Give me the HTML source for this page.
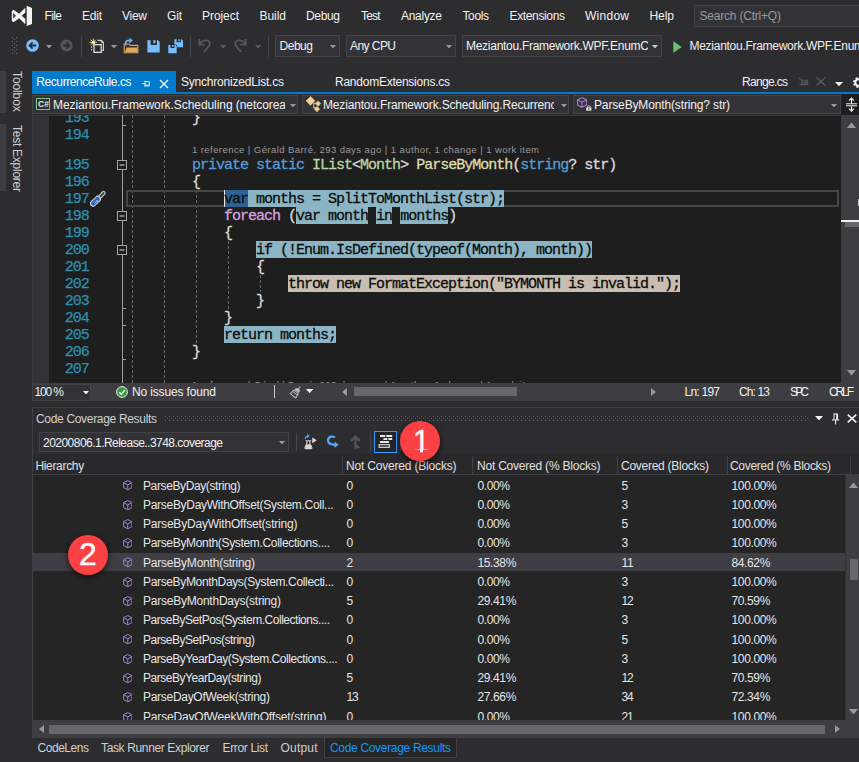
<!DOCTYPE html>
<html><head><meta charset="utf-8"><title>Code Coverage Results</title>
<style>
html,body{margin:0;padding:0;background:#2d2d30;}
body{width:859px;height:762px;position:relative;overflow:hidden;font-family:"Liberation Sans",sans-serif;}
.b{position:absolute;box-sizing:border-box;display:block;}
.t{position:absolute;white-space:pre;line-height:16px;font-family:"Liberation Sans",sans-serif;}
.m{font-family:"Liberation Mono",monospace;}
.code{position:absolute;left:128px;white-space:pre;font-family:"Liberation Mono",monospace;font-size:15px;letter-spacing:-1px;line-height:17px;height:17px;color:#dcdcdc;-webkit-text-stroke:0.3px;}
.ln{position:absolute;left:49px;width:39.8px;text-align:right;font-family:"Liberation Mono",monospace;font-size:15px;letter-spacing:-1px;line-height:17px;height:17px;color:#2b91af;-webkit-text-stroke:0.25px;}
.k{color:#569cd6}.c{color:#d8a0df}.i{color:#b8d7a3}.f{color:#dcdcaa}.s{color:#d69d85}.ty{color:#4ec9b0}
.hb{background:#8bb5c5;color:#000}.hn{background:#c8bdb0;color:#000}.sel{background:#2b6194;color:#000}
.d{color:#0c0c0c}
</style></head><body>
<div class="b " style="left:0px;top:71px;width:6px;height:42px;background:#3d3d42;"></div>
<div class="b " style="left:0px;top:124px;width:6px;height:67px;background:#3d3d42;"></div>
<span class="t" style="left:8px;top:71px;width:18px;font-size:12px;color:#d0d0d0;writing-mode:vertical-rl;line-height:18px;letter-spacing:-0.1px">Toolbox</span>
<span class="t" style="left:8px;top:125px;width:18px;font-size:12px;color:#d0d0d0;writing-mode:vertical-rl;line-height:18px;letter-spacing:-0.25px">Test Explorer</span>
<svg class="b" style="left:11px;top:5px;" width="22" height="22" viewBox="0 0 22 22"><path fill="#f4f4f4" d="M15.7 0.8L21 2.9V19L15.7 21Z"/><path fill="#f4f4f4" fill-rule="evenodd" d="M14.3 2.8V19.2L8.1 13.3L2.6 17.2L0.8 16V6L2.6 4.8L8.1 8.7Z M14.3 7.6V13.8L10.8 10.8Z M2.2 7.8V13.8L4.8 10.8Z"/></svg>
<span class="t " style="left:44.50px;top:7.92px;font-size:12px;color:#f1f1f1;letter-spacing:-0.612px;">File</span>
<span class="t " style="left:82.00px;top:7.92px;font-size:12px;color:#f1f1f1;letter-spacing:-0.226px;">Edit</span>
<span class="t " style="left:122.00px;top:7.92px;font-size:12px;color:#f1f1f1;letter-spacing:-0.264px;">View</span>
<span class="t " style="left:167.00px;top:7.92px;font-size:12px;color:#f1f1f1;letter-spacing:-0.167px;">Git</span>
<span class="t " style="left:202.00px;top:7.92px;font-size:12px;color:#f1f1f1;letter-spacing:-0.058px;">Project</span>
<span class="t " style="left:259.50px;top:7.92px;font-size:12px;color:#f1f1f1;letter-spacing:-0.046px;">Build</span>
<span class="t " style="left:306.00px;top:7.92px;font-size:12px;color:#f1f1f1;letter-spacing:-0.340px;">Debug</span>
<span class="t " style="left:361.00px;top:7.92px;font-size:12px;color:#f1f1f1;letter-spacing:-0.836px;">Test</span>
<span class="t " style="left:401.00px;top:7.92px;font-size:12px;color:#f1f1f1;letter-spacing:-0.282px;">Analyze</span>
<span class="t " style="left:462.50px;top:7.92px;font-size:12px;color:#f1f1f1;letter-spacing:-0.378px;">Tools</span>
<span class="t " style="left:509.50px;top:7.92px;font-size:12px;color:#f1f1f1;letter-spacing:-0.355px;">Extensions</span>
<span class="t " style="left:585.00px;top:7.92px;font-size:12px;color:#f1f1f1;letter-spacing:0.264px;">Window</span>
<span class="t " style="left:649.50px;top:7.92px;font-size:12px;color:#f1f1f1;letter-spacing:-0.060px;">Help</span>
<div class="b " style="left:694px;top:5px;width:170px;height:22px;background:#333337;border:1px solid #434346;"></div>
<span class="t " style="left:699.50px;top:7.92px;font-size:12px;color:#999999;letter-spacing:-0.204px;">Search (Ctrl+Q)</span>
<svg class="b" style="left:12px;top:37px;" width="5" height="18" viewBox="0 0 5 18"><rect x="0" y="0" width="1" height="1" fill="#66666b"/><rect x="4" y="0" width="1" height="1" fill="#66666b"/><rect x="2" y="2" width="1" height="1" fill="#66666b"/><rect x="2" y="2" width="1" height="1" fill="#66666b"/><rect x="0" y="4" width="1" height="1" fill="#66666b"/><rect x="4" y="4" width="1" height="1" fill="#66666b"/><rect x="2" y="6" width="1" height="1" fill="#66666b"/><rect x="2" y="6" width="1" height="1" fill="#66666b"/><rect x="0" y="8" width="1" height="1" fill="#66666b"/><rect x="4" y="8" width="1" height="1" fill="#66666b"/><rect x="2" y="10" width="1" height="1" fill="#66666b"/><rect x="2" y="10" width="1" height="1" fill="#66666b"/><rect x="0" y="12" width="1" height="1" fill="#66666b"/><rect x="4" y="12" width="1" height="1" fill="#66666b"/><rect x="2" y="14" width="1" height="1" fill="#66666b"/><rect x="2" y="14" width="1" height="1" fill="#66666b"/><rect x="0" y="16" width="1" height="1" fill="#66666b"/><rect x="4" y="16" width="1" height="1" fill="#66666b"/></svg>
<svg class="b" style="left:25.6px;top:39.3px;" width="13" height="13" viewBox="0 0 13 13"><circle cx="6.5" cy="6.5" r="6.3" fill="#75beff"/><path d="M10.2 6.5H3.8M6.6 3.4L3.5 6.5L6.6 9.6" stroke="#2d2d30" stroke-width="1.8" fill="none"/></svg>
<svg class="b" style="left:46.0px;top:44.75px;" width="6" height="3.5" viewBox="0 0 6 3.5"><path d="M0 0H6L3.0 3.5Z" fill="#999"/></svg>
<svg class="b" style="left:59.5px;top:39.3px;" width="13" height="13" viewBox="0 0 13 13"><circle cx="6.5" cy="6.5" r="6.1" fill="#55555a"/><path d="M2.8 6.5H9.2M6.4 3.4L9.5 6.5L6.4 9.6" stroke="#2d2d30" stroke-width="1.8" fill="none"/></svg>
<div class="b " style="left:81px;top:36px;width:1px;height:21px;background:#46464a;"></div>
<svg class="b" style="left:88px;top:37px;" width="17" height="17" viewBox="0 0 17 17"><path d="M9.5 3.4H13.4L15.4 5.4V13.5H14" stroke="#d8d8d8" fill="none" stroke-width="1.1"/><path d="M13.2 3.4V5.6H15.4" stroke="#d8d8d8" fill="none" stroke-width="0.9"/><path d="M6 7.6H13.2V15.4H6Z" stroke="#e4e4e4" fill="#2d2d30" stroke-width="1.2"/><path d="M3.6 9.2V14.6" stroke="#d8d8d8" stroke-width="1" stroke-dasharray="1.6 1.2"/><path d="M5.3 1.6V9M1.6 5.3H9M2.7 2.7L7.9 7.9M7.9 2.7L2.7 7.9" stroke="#f2d58a" stroke-width="1"/><circle cx="5.3" cy="5.3" r="1.3" fill="#fff3c8"/></svg>
<svg class="b" style="left:111.0px;top:44.75px;" width="6" height="3.5" viewBox="0 0 6 3.5"><path d="M0 0H6L3.0 3.5Z" fill="#999"/></svg>
<svg class="b" style="left:123px;top:37px;" width="16" height="17" viewBox="0 0 16 17"><path d="M1.2 7H6L7.2 8.4H14.8V15.8H1.2Z" fill="#3a3128" stroke="#dba55c" stroke-width="1.1"/><path d="M1.8 15.3L3.6 10.6H14.4V15.3Z" fill="#dca960"/><path d="M2.6 8.6V6.6C2.6 4.2 4.2 3.4 6.6 3.4H7.4" stroke="#6cb6ff" fill="none" stroke-width="1.6"/><path d="M6.4 0.6L9.8 3.5L6.4 6.6Z" fill="#6cb6ff"/></svg>
<svg class="b" style="left:146.5px;top:39.8px;" width="13" height="13" viewBox="0 0 13 13"><path d="M0.4 0.3H11L12.7 2V12.6H0.4Z" fill="#75beff"/><rect x="3.6" y="0" width="6.3" height="5" fill="#2d2d30"/><rect x="6.3" y="0.2" width="2.1" height="3" fill="#75beff"/></svg>
<svg class="b" style="left:167.5px;top:38.5px;" width="16" height="15" viewBox="0 0 16 15"><path d="M6.4 0.3H13.6L15 1.7V8.3H6.4Z" fill="#75beff"/><rect x="8.6" y="0" width="4.2" height="3.2" fill="#2d2d30"/><rect x="10.4" y="0.2" width="1.4" height="2" fill="#75beff"/><path d="M-0.4 5.4H8.2L9.3 6.5V14.8H-0.4Z" fill="#2d2d30"/><path d="M0.3 6H7.6L8.7 7.1V14.3H0.3Z" fill="#75beff"/><rect x="2.4" y="5.8" width="4.2" height="3.2" fill="#2d2d30"/><rect x="4.2" y="6" width="1.4" height="2" fill="#75beff"/></svg>
<div class="b " style="left:190px;top:36px;width:1px;height:21px;background:#46464a;"></div>
<svg class="b" style="left:198px;top:38px;" width="14" height="15" viewBox="0 0 14 15"><path d="M1.4 1.1V6.6H6.7" stroke="#57575b" fill="none" stroke-width="1.8"/><path d="M1.8 6.2C4 1.5 11.5 1 11.8 5.5C11.9 8 8 11.5 5.6 14" stroke="#57575b" fill="none" stroke-width="1.8"/></svg>
<svg class="b" style="left:219.8px;top:44.5px;" width="6.4" height="3.6" viewBox="0 0 6.4 3.6"><path d="M0 0H6.4L3.2 3.6Z" fill="#5c5c60"/></svg>
<svg class="b" style="left:233px;top:38px;" width="14" height="15" viewBox="0 0 14 15"><path d="M12.6 1.1V6.6H7.3" stroke="#57575b" fill="none" stroke-width="1.8"/><path d="M12.2 6.2C10 1.5 2.5 1 2.2 5.5C2.1 8 6 11.5 8.4 14" stroke="#57575b" fill="none" stroke-width="1.8"/></svg>
<svg class="b" style="left:254.8px;top:44.5px;" width="6.4" height="3.6" viewBox="0 0 6.4 3.6"><path d="M0 0H6.4L3.2 3.6Z" fill="#5c5c60"/></svg>
<div class="b " style="left:268px;top:36px;width:1px;height:21px;background:#46464a;"></div>
<div class="b " style="left:275px;top:35px;width:64.5px;height:21.5px;background:#333337;border:1px solid #434346;"></div>
<span class="t " style="left:279.50px;top:37.92px;font-size:12px;color:#f1f1f1;letter-spacing:-0.465px;">Debug</span>
<svg class="b" style="left:329.5px;top:44.75px;" width="6" height="3.5" viewBox="0 0 6 3.5"><path d="M0 0H6L3.0 3.5Z" fill="#999"/></svg>
<div class="b " style="left:346px;top:35px;width:110px;height:21.5px;background:#333337;border:1px solid #434346;"></div>
<span class="t " style="left:350.00px;top:37.92px;font-size:12px;color:#f1f1f1;letter-spacing:-0.558px;">Any CPU</span>
<svg class="b" style="left:446.0px;top:44.75px;" width="6" height="3.5" viewBox="0 0 6 3.5"><path d="M0 0H6L3.0 3.5Z" fill="#999"/></svg>
<div class="b " style="left:462px;top:35px;width:200px;height:21.5px;background:#333337;border:1px solid #434346;"></div>
<div class="b" style="left:463px;top:36px;width:184.5px;height:20px;overflow:hidden">
<span class="t " style="left:3.00px;top:1.92px;font-size:12px;color:#f1f1f1;letter-spacing:-0.276px;">Meziantou.Framework.WPF.EnumC</span>
</div>
<svg class="b" style="left:652.0px;top:44.75px;" width="6" height="3.5" viewBox="0 0 6 3.5"><path d="M0 0H6L3.0 3.5Z" fill="#c8c8c8"/></svg>
<svg class="b" style="left:672.5px;top:40.5px;" width="9" height="12" viewBox="0 0 9 12"><path d="M0.3 0.3L8.7 6L0.3 11.7Z" fill="#6cc26c"/></svg>
<span class="t " style="left:689.50px;top:37.92px;font-size:12px;color:#f1f1f1;letter-spacing:-0.276px;">Meziantou.Framework.WPF.EnumC</span>
<div class="b " style="left:32px;top:71px;width:144px;height:22px;background:#007acc;"></div>
<div class="b " style="left:32px;top:92px;width:827px;height:2px;background:#007acc;"></div>
<span class="t " style="left:36.30px;top:73.52px;font-size:12px;color:#ffffff;letter-spacing:-0.421px;">RecurrenceRule.cs</span>
<svg class="b" style="left:141.5px;top:80px;" width="9" height="8" viewBox="0 0 9 8"><path d="M0.2 3.7H3M3 0.6V6.8M3 1.7H7.4V5.2H3M3 5.8H7.4" stroke="#eaf4fb" fill="none" stroke-width="1"/></svg>
<svg class="b" style="left:159px;top:79px;" width="10" height="10" viewBox="0 0 10 10"><path d="M1 1L9 9M9 1L1 9" stroke="#ffffff" stroke-width="1.3"/></svg>
<span class="t " style="left:181.00px;top:73.52px;font-size:12px;color:#f1f1f1;letter-spacing:-0.206px;">SynchronizedList.cs</span>
<span class="t " style="left:335.00px;top:73.52px;font-size:12px;color:#f1f1f1;letter-spacing:-0.244px;">RandomExtensions.cs</span>
<span class="t " style="left:742.00px;top:73.52px;font-size:12px;color:#f1f1f1;letter-spacing:-0.671px;">Range.cs</span>
<svg class="b" style="left:797.5px;top:76.5px;" width="12" height="9" viewBox="0 0 12 9"><path d="M0.6 0.6L3 2.8" stroke="#58585d" stroke-width="1.1"/><rect x="3" y="2.6" width="6" height="4.6" fill="#4c4c51"/><path d="M3.4 3L8.6 6.8M8.6 3L3.4 6.8" stroke="#3a3a3e" stroke-width="0.8"/><path d="M1.4 7.6H10.6" stroke="#58585d" stroke-width="1.1"/><path d="M9.4 2.4V7.6" stroke="#58585d" stroke-width="1"/></svg>
<svg class="b" style="left:816px;top:76.5px;" width="10" height="9" viewBox="0 0 10 9"><path d="M0.6 0.5L9.4 8.5M9.4 0.5L0.6 8.5" stroke="#5c5c61" stroke-width="1.2"/></svg>
<svg class="b" style="left:835.0px;top:81.85px;" width="8" height="4.3" viewBox="0 0 8 4.3"><path d="M0 0H8L4.0 4.3Z" fill="#f1f1f1"/></svg>
<svg class="b" style="left:851.5px;top:75.5px;" width="13" height="13" viewBox="0 0 13 13"><circle cx="6.5" cy="6.5" r="4.2" stroke="#f1f1f1" stroke-width="2.6" fill="none" stroke-dasharray="1.9 1.4"/><circle cx="6.5" cy="6.5" r="3.2" stroke="#f1f1f1" stroke-width="2" fill="none"/></svg>
<div class="b " style="left:32px;top:94px;width:827px;height:22px;background:#2d2d30;"></div>
<div class="b " style="left:32px;top:95px;width:266px;height:19px;background:#333337;border:1px solid #434346;"></div>
<div class="b " style="left:302px;top:95px;width:267px;height:19px;background:#333337;border:1px solid #434346;"></div>
<div class="b " style="left:573px;top:95px;width:267.5px;height:19px;background:#333337;border:1px solid #434346;"></div>
<div class="b " style="left:841px;top:94px;width:18px;height:22px;background:#1e1e1e;"></div>
<svg class="b" style="left:36px;top:98px;" width="14" height="12" viewBox="0 0 14 12"><rect x="0.5" y="0.5" width="13" height="11" fill="none" stroke="#7cc47c" stroke-width="1"/><text x="2" y="9.3" font-family="Liberation Sans" font-size="8.5" font-weight="bold" fill="#e0e0e0">C#</text></svg>
<div class="b" style="left:50px;top:95px;width:235px;height:19px;overflow:hidden">
<span class="t " style="left:3.00px;top:2.42px;font-size:12px;color:#f1f1f1;letter-spacing:-0.063px;">Meziantou.Framework.Scheduling (netcorea</span>
</div>
<svg class="b" style="left:290.0px;top:103.75px;" width="6" height="3.5" viewBox="0 0 6 3.5"><path d="M0 0H6L3.0 3.5Z" fill="#999"/></svg>
<svg class="b" style="left:305px;top:95px;" width="17" height="18" viewBox="0 0 17 18"><path d="M8.3 8.2H10.6M8.7 8.2V12.6H10.4" stroke="#d8b878" fill="none" stroke-width="1.1"/><path d="M5.5 1.4L9.9 5.8L5.5 10.2L1.1 5.8Z" fill="#f2d59c" stroke="#e2bd7c" stroke-width="0.8"/><path d="M13 5.9L15.7 8.6L13 11.3L10.3 8.6Z" fill="#f2d59c" stroke="#e2bd7c" stroke-width="0.7"/><path d="M12 11.4L14.7 14.1L12 16.8L9.3 14.1Z" fill="#f2d59c" stroke="#e2bd7c" stroke-width="0.7"/></svg>
<div class="b" style="left:320px;top:95px;width:234px;height:19px;overflow:hidden">
<span class="t " style="left:3.00px;top:2.42px;font-size:12px;color:#f1f1f1;letter-spacing:-0.169px;">Meziantou.Framework.Scheduling.Recurrenc</span>
</div>
<svg class="b" style="left:561.0px;top:103.75px;" width="6" height="3.5" viewBox="0 0 6 3.5"><path d="M0 0H6L3.0 3.5Z" fill="#999"/></svg>
<svg class="b" style="left:577px;top:97.3px;" width="10" height="11" viewBox="0 0 10 11"><path d="M5 0.6L9.4 2.8V8L5 10.4L0.6 8V2.8Z M0.8 2.9L5 5.2L9.2 2.9 M5 5.2V10.2" fill="none" stroke="#a77fd4" stroke-width="1.05" stroke-linejoin="round"/></svg>
<svg class="b" style="left:586px;top:105.3px;" width="6" height="6" viewBox="0 0 6 6"><rect x="0.2" y="2.4" width="5.2" height="3.3" fill="#e0e0e0"/><rect x="2.2" y="3.4" width="1.2" height="1.3" fill="#333337"/><path d="M1.4 2.6V1.7C1.4 0.4 4.2 0.4 4.2 1.7V2.6" stroke="#e0e0e0" fill="none" stroke-width="0.9"/></svg>
<span class="t " style="left:594.00px;top:97.42px;font-size:12px;color:#f1f1f1;letter-spacing:-0.141px;">ParseByMonth(string? str)</span>
<svg class="b" style="left:831.0px;top:103.75px;" width="6" height="3.5" viewBox="0 0 6 3.5"><path d="M0 0H6L3.0 3.5Z" fill="#999"/></svg>
<svg class="b" style="left:845px;top:97px;" width="13" height="15" viewBox="0 0 13 15"><path d="M1 6.8H12M1 8.8H12" stroke="#f1f1f1" stroke-width="1"/><path d="M6.5 1.2V6.4M6.5 9.2V14" stroke="#f1f1f1" stroke-width="1.1"/><path d="M4 3.6L6.5 1L9 3.6M4 11.6L6.5 14.2L9 11.6" stroke="#f1f1f1" fill="none" stroke-width="1.1"/></svg>
<div class="b " style="left:32px;top:115px;width:809px;height:268px;background:#1e1e1e;"></div>
<div class="b " style="left:32px;top:115px;width:17px;height:268px;background:#333335;"></div>
<div class="b " style="left:32px;top:115px;width:809px;height:1px;background:#38383b;"></div>
<div class="b " style="left:32px;top:115px;width:1px;height:268px;background:#3a3a3d;"></div>
<div class="b" style="left:0;top:0;width:859px;height:762px;clip-path:inset(115px 18px 379px 32px)">
<div class="b" style="left:132px;top:100px;width:1px;height:290px;background:repeating-linear-gradient(to bottom,#6a6a6a 0,#6a6a6a 3px,transparent 3px,transparent 5px)"></div>
<div class="b" style="left:164px;top:100px;width:1px;height:290px;background:repeating-linear-gradient(to bottom,#6a6a6a 0,#6a6a6a 3px,transparent 3px,transparent 5px)"></div>
<div class="b" style="left:196px;top:190px;width:1px;height:153px;background:repeating-linear-gradient(to bottom,#6a6a6a 0,#6a6a6a 3px,transparent 3px,transparent 5px)"></div>
<div class="b" style="left:228px;top:241px;width:1px;height:68px;background:repeating-linear-gradient(to bottom,#6a6a6a 0,#6a6a6a 3px,transparent 3px,transparent 5px)"></div>
<div class="b" style="left:260px;top:275px;width:1px;height:17px;background:repeating-linear-gradient(to bottom,#6a6a6a 0,#6a6a6a 3px,transparent 3px,transparent 5px)"></div>
<div class="b " style="left:122px;top:100px;width:1px;height:290px;background:#a0a0a0;"></div>
<div class="b " style="left:122px;top:125px;width:4px;height:1px;background:#a0a0a0;"></div>
<div class="b " style="left:122px;top:308px;width:4px;height:1px;background:#a0a0a0;"></div>
<div class="b " style="left:122px;top:325px;width:4px;height:1px;background:#a0a0a0;"></div>
<div class="b " style="left:122px;top:359px;width:4px;height:1px;background:#a0a0a0;"></div>
<svg class="b" style="left:117px;top:160px;" width="10" height="10" viewBox="0 0 10 10"><rect x="0.5" y="0.5" width="9" height="9" fill="#1e1e1e" stroke="#a5a5a5"/><path d="M2.5 5H7.5" stroke="#dcdcdc" stroke-width="1"/></svg>
<svg class="b" style="left:117px;top:211px;" width="10" height="10" viewBox="0 0 10 10"><rect x="0.5" y="0.5" width="9" height="9" fill="#1e1e1e" stroke="#a5a5a5"/><path d="M2.5 5H7.5" stroke="#dcdcdc" stroke-width="1"/></svg>
<svg class="b" style="left:117px;top:245px;" width="10" height="10" viewBox="0 0 10 10"><rect x="0.5" y="0.5" width="9" height="9" fill="#1e1e1e" stroke="#a5a5a5"/><path d="M2.5 5H7.5" stroke="#dcdcdc" stroke-width="1"/></svg>
<div class="b " style="left:126px;top:190px;width:713px;height:17px;border:2px solid #464646;"></div>
<div class="b " style="left:224.0px;top:190px;width:280.0px;height:17px;background:#8bb5c5;"></div>
<div class="b " style="left:224.0px;top:190px;width:24.0px;height:17px;background:#2b6194;"></div>
<div class="b " style="left:296.0px;top:207px;width:72.0px;height:17px;background:#8bb5c5;"></div>
<div class="b " style="left:376.0px;top:207px;width:16.0px;height:17px;background:#8bb5c5;"></div>
<div class="b " style="left:400.0px;top:207px;width:48.0px;height:17px;background:#8bb5c5;"></div>
<div class="b " style="left:256.0px;top:241px;width:336.0px;height:17px;background:#8bb5c5;"></div>
<div class="b " style="left:288.0px;top:275px;width:392.0px;height:17px;background:#c8bdb0;"></div>
<div class="b " style="left:224.0px;top:326px;width:112.0px;height:17px;background:#8bb5c5;"></div>
<div class="b " style="left:224px;top:190px;width:1px;height:17px;background:#e8e8e8;"></div>
<div class="ln" style="top:109.5px">193</div>
<div class="code" style="top:109.5px">        }</div>
<div class="ln" style="top:126.5px">194</div>
<div class="ln" style="top:156.5px">195</div>
<div class="code" style="top:156.5px">        <span class="k">private</span> <span class="k">static</span> <span class="i">IList</span>&lt;<span class="i">Month</span>&gt; <span class="f">ParseByMonth</span>(<span class="k">string</span>? str)</div>
<div class="ln" style="top:173.5px">196</div>
<div class="code" style="top:173.5px">        {</div>
<div class="ln" style="top:190.5px">197</div>
<div class="code" style="top:190.5px">            <span class="d">var months = SplitToMonthList(str);</span></div>
<div class="ln" style="top:207.5px">198</div>
<div class="code" style="top:207.5px">            <span class="c">foreach</span> (<span class="d">var month</span> <span class="d">in</span> <span class="d">months</span>)</div>
<div class="ln" style="top:224.5px">199</div>
<div class="code" style="top:224.5px">            {</div>
<div class="ln" style="top:241.5px">200</div>
<div class="code" style="top:241.5px">                <span class="d">if (!Enum.IsDefined(typeof(Month), month))</span></div>
<div class="ln" style="top:258.5px">201</div>
<div class="code" style="top:258.5px">                {</div>
<div class="ln" style="top:275.5px">202</div>
<div class="code" style="top:275.5px">                    <span class="d">throw new FormatException("BYMONTH is invalid.");</span></div>
<div class="ln" style="top:292.5px">203</div>
<div class="code" style="top:292.5px">                }</div>
<div class="ln" style="top:309.5px">204</div>
<div class="code" style="top:309.5px">            }</div>
<div class="ln" style="top:326.5px">205</div>
<div class="code" style="top:326.5px">            <span class="d">return months;</span></div>
<div class="ln" style="top:343.5px">206</div>
<div class="code" style="top:343.5px">        }</div>
<div class="ln" style="top:360.5px">207</div>
<span class="t " style="left:192.00px;top:141.94px;font-size:9.5px;color:#999999;letter-spacing:0.429px;">1 reference | Gérald Barré, 293 days ago | 1 author, 1 change | 1 work item</span>
<span class="t " style="left:192.00px;top:376.64px;font-size:9.5px;color:#999999;letter-spacing:0.429px;">1 reference | Gérald Barré, 293 days ago | 1 author, 1 change | 1 work item</span>
<svg class="b" style="left:90px;top:190px;" width="17" height="17" viewBox="0 0 17 17"><path d="M8.6 8.4L13.6 3" stroke="#c4c4c4" stroke-width="4.2" stroke-linecap="round"/><path d="M9.2 7.8L13.5 3.1" stroke="#454548" stroke-width="2" stroke-linecap="round"/><path d="M3.1 13.6L7.8 8.9" stroke="#d4d4d4" stroke-width="6.4" stroke-linecap="round"/><path d="M3.2 13.5L7.6 9.1" stroke="#2a66c0" stroke-width="4.4" stroke-linecap="round"/><path d="M4.2 11.2L6.6 13.4M5.6 9.8L8 12M4.4 13.6L8 10" stroke="#a8c4ec" stroke-width="0.6"/></svg>
</div>
<div class="b " style="left:841px;top:115px;width:18px;height:268px;background:#3e3e42;"></div>
<svg class="b" style="left:847px;top:122px;" width="9" height="6" viewBox="0 0 9 6"><path d="M0 6H9L4.5 0.5Z" fill="#999"/></svg>
<svg class="b" style="left:847px;top:370px;" width="9" height="6" viewBox="0 0 9 6"><path d="M0 0H9L4.5 5.5Z" fill="#999"/></svg>
<div class="b " style="left:841px;top:220px;width:18px;height:2px;background:#f1f1f1;"></div>
<div class="b " style="left:845px;top:222px;width:14px;height:5px;background:#686868;"></div>
<div class="b " style="left:857.5px;top:199px;width:1.5px;height:7px;background:#c8c8c8;"></div>
<div class="b " style="left:32px;top:383px;width:827px;height:18px;background:#3e3e42;"></div>
<div class="b " style="left:32px;top:384px;width:58.5px;height:16.5px;background:#333337;border:1px solid #434346;"></div>
<span class="t " style="left:34.50px;top:383.92px;font-size:12px;color:#f1f1f1;letter-spacing:-1.131px;">100 %</span>
<svg class="b" style="left:83.0px;top:390.75px;" width="6" height="3.5" viewBox="0 0 6 3.5"><path d="M0 0H6L3.0 3.5Z" fill="#f1f1f1"/></svg>
<svg class="b" style="left:116px;top:386px;" width="12" height="12" viewBox="0 0 12 12"><circle cx="6" cy="6" r="5.4" fill="#3a9a3a" stroke="#e8e8e8" stroke-width="1"/><path d="M3.2 6.2L5.2 8.2L8.8 4.2" stroke="#ffffff" stroke-width="1.5" fill="none"/></svg>
<span class="t " style="left:132.00px;top:383.92px;font-size:12px;color:#f1f1f1;letter-spacing:-0.146px;">No issues found</span>
<div class="b " style="left:274px;top:385px;width:1.4px;height:13px;background:#c4ccdc;"></div>
<svg class="b" style="left:288.5px;top:384.5px;" width="14" height="14" viewBox="0 0 14 14"><g transform="translate(7 7) rotate(38)" stroke="#bdbdbd" fill="none"><path d="M0 -7V-4" stroke-width="1"/><path d="M-2.9 -0.9Q-2.9 -4.3 0 -4.3Q2.9 -4.3 2.9 -0.9Z" fill="#bdbdbd" stroke="none"/><path d="M-2.8 -0.2L-3.5 4.9H3.5L2.8 -0.2Z" stroke-width="1"/><path d="M-3 1.6H3" stroke="#d8c8d8" stroke-width="0.8"/></g></svg>
<svg class="b" style="left:305.9px;top:389.09999999999997px;" width="7.2" height="4.2" viewBox="0 0 7.2 4.2"><path d="M0 0H7.2L3.6 4.2Z" fill="#f4f4f4"/></svg>
<svg class="b" style="left:342px;top:388px;" width="5" height="8" viewBox="0 0 5 8"><path d="M5 0V8L0 4Z" fill="#999"/></svg>
<div class="b " style="left:354px;top:387px;width:163px;height:9px;background:#686868;"></div>
<svg class="b" style="left:651px;top:388px;" width="5" height="8" viewBox="0 0 5 8"><path d="M0 0V8L5 4Z" fill="#999"/></svg>
<span class="t " style="left:684.50px;top:383.92px;font-size:12px;color:#f1f1f1;letter-spacing:-0.756px;">Ln: 197</span>
<span class="t " style="left:739.00px;top:383.92px;font-size:12px;color:#f1f1f1;letter-spacing:-0.871px;">Ch: 13</span>
<span class="t " style="left:790.00px;top:383.92px;font-size:12px;color:#f1f1f1;letter-spacing:-2.837px;">SPC</span>
<span class="t " style="left:829.00px;top:383.92px;font-size:12px;color:#f1f1f1;letter-spacing:-2.112px;">CRLF</span>
<div class="b " style="left:32px;top:407px;width:827px;height:331px;background:#2d2d30;border:1px solid #3f3f46;border-right:none;border-bottom:none;"></div>
<span class="t " style="left:36.00px;top:410.92px;font-size:12px;color:#d0d0d0;letter-spacing:-0.320px;">Code Coverage Results</span>
<div class="b" style="left:165px;top:416px;width:643px;height:5px;background-image:radial-gradient(circle at 0.5px 0.5px,#5a5a5f 0.55px,transparent 0.7px),radial-gradient(circle at 0.5px 0.5px,#5a5a5f 0.55px,transparent 0.7px);background-size:4px 4px,4px 4px;background-position:0 0,2px 2px"></div>
<svg class="b" style="left:815.0px;top:415.75px;" width="8" height="4.5" viewBox="0 0 8 4.5"><path d="M0 0H8L4.0 4.5Z" fill="#f1f1f1"/></svg>
<svg class="b" style="left:831px;top:412.5px;" width="10" height="12" viewBox="0 0 10 12"><path d="M2.6 0.9H6.6" stroke="#f1f1f1" stroke-width="1"/><path d="M3 0.9V6.6" stroke="#f1f1f1" stroke-width="1"/><path d="M6.1 0.9V6.6" stroke="#f1f1f1" stroke-width="1.9"/><path d="M1 6.9H8.2" stroke="#f1f1f1" stroke-width="1.1"/><path d="M4.6 7V11.4" stroke="#f1f1f1" stroke-width="1.1"/></svg>
<svg class="b" style="left:847px;top:413.5px;" width="10" height="9" viewBox="0 0 10 9"><path d="M0.7 0.6L9.3 8.4M9.3 0.6L0.7 8.4" stroke="#f1f1f1" stroke-width="1.6"/></svg>
<div class="b " style="left:39px;top:432px;width:250px;height:19.5px;background:#333337;border:1px solid #434346;"></div>
<span class="t " style="left:43.00px;top:434.62px;font-size:12px;color:#f1f1f1;letter-spacing:-0.526px;">20200806.1.Release..3748.coverage</span>
<svg class="b" style="left:279.0px;top:440.75px;" width="6" height="3.5" viewBox="0 0 6 3.5"><path d="M0 0H6L3.0 3.5Z" fill="#999"/></svg>
<div class="b " style="left:296px;top:433px;width:1px;height:18px;background:#46464a;"></div>
<svg class="b" style="left:304px;top:434px;" width="14" height="16" viewBox="0 0 14 16"><path d="M1.6 6.8H7.2M2.9 6.8V9.4L0.9 13.6Q0.7 14.6 1.8 14.6H7Q8.1 14.6 7.9 13.6L5.9 9.4V6.8" stroke="#d8d8d8" fill="none" stroke-width="1.1"/><path d="M1.5 12.2L2.6 10.2H6.2L7.3 12.2V14H1.5Z" fill="#d8d8d8"/><path d="M8.2 3.4L12.9 6.3L8.2 9.2Z" fill="#d8d8d8"/><path d="M1.2 5C1.3 3 2.6 2 4.3 2M3 0.6L4.9 2L3 3.6" stroke="#4fa3f7" fill="none" stroke-width="1.2"/></svg>
<svg class="b" style="left:326px;top:435px;" width="14" height="14" viewBox="0 0 14 14"><path d="M9 2.6C7.5 0.8 2 1 2 5.4C2 9.2 5.5 9.6 9.5 9.6" stroke="#55aaff" fill="none" stroke-width="2.2"/><path d="M8.6 6.4L12.6 9.7L8.6 13Z" fill="#55aaff"/></svg>
<svg class="b" style="left:350px;top:435px;" width="11" height="15" viewBox="0 0 11 15"><path d="M5.5 1.5V14M1.2 6L5.5 1.5L9.8 6M5.5 10L9.3 13" stroke="#58585d" fill="none" stroke-width="1.9"/></svg>
<div class="b " style="left:370px;top:433px;width:1px;height:18px;background:#46464a;"></div>
<div class="b " style="left:374px;top:431px;width:22.5px;height:22px;background:#252526;border:1px solid #3399ff;"></div>
<svg class="b" style="left:378px;top:434px;" width="15" height="15" viewBox="0 0 15 15"><path d="M2 1.9H7.3M8.3 1.9H14.2M5.4 5H9.3M10.3 5H14.2M2 8H11" stroke="#e6e6e6" stroke-width="2"/><rect x="1.1" y="10.7" width="10.2" height="2.6" fill="none" stroke="#e6e6e6" stroke-width="1.1"/></svg>
<div class="b " style="left:400px;top:433px;width:1px;height:18px;background:#46464a;"></div>
<div class="b " style="left:33px;top:454px;width:826px;height:266px;background:#252526;"></div>
<div class="b " style="left:33px;top:454px;width:826px;height:21px;background:#29292b;border-bottom:1px solid #3f3f46;"></div>
<div class="b " style="left:342px;top:456px;width:1px;height:18px;background:#3f3f46;"></div>
<div class="b " style="left:472px;top:456px;width:1px;height:18px;background:#3f3f46;"></div>
<div class="b " style="left:616.5px;top:456px;width:1px;height:18px;background:#3f3f46;"></div>
<div class="b " style="left:726.5px;top:456px;width:1px;height:18px;background:#3f3f46;"></div>
<div class="b " style="left:849.5px;top:456px;width:1px;height:18px;background:#3f3f46;"></div>
<span class="t " style="left:35.40px;top:457.92px;font-size:12px;color:#e0e0e0;letter-spacing:-0.318px;">Hierarchy</span>
<span class="t " style="left:346.00px;top:457.92px;font-size:12px;color:#e0e0e0;letter-spacing:-0.186px;">Not Covered (Blocks)</span>
<span class="t " style="left:477.00px;top:457.92px;font-size:12px;color:#e0e0e0;letter-spacing:-0.216px;">Not Covered (% Blocks)</span>
<span class="t " style="left:621.00px;top:457.92px;font-size:12px;color:#e0e0e0;letter-spacing:-0.268px;">Covered (Blocks)</span>
<span class="t " style="left:730.00px;top:457.92px;font-size:12px;color:#e0e0e0;letter-spacing:-0.296px;">Covered (% Blocks)</span>
<div class="b" style="left:0;top:0;width:859px;height:762px;clip-path:inset(475px 13px 42px 33px)">
<svg class="b" style="left:122.6px;top:480.3px;" width="9.5" height="10.4" viewBox="0 0 10 11"><path d="M5 0.6L9.4 2.8V8L5 10.4L0.6 8V2.8Z M0.8 2.9L5 5.2L9.2 2.9 M5 5.2V10.2" fill="none" stroke="#a77fd4" stroke-width="1.05" stroke-linejoin="round"/></svg>
<span class="t " style="left:143.00px;top:477.52px;font-size:12px;color:#e6e6e6;letter-spacing:-0.384px;">ParseByDay(string)</span>
<span class="t " style="left:346.50px;top:477.52px;font-size:12px;color:#e6e6e6;letter-spacing:-0.844px;">0</span>
<span class="t " style="left:477.50px;top:477.52px;font-size:12px;color:#e6e6e6;letter-spacing:-0.409px;">0.00%</span>
<span class="t " style="left:621.50px;top:477.52px;font-size:12px;color:#e6e6e6;letter-spacing:-0.844px;">5</span>
<span class="t " style="left:731.50px;top:477.52px;font-size:12px;color:#e6e6e6;letter-spacing:-0.354px;">100.00%</span>
<svg class="b" style="left:122.6px;top:499.57px;" width="9.5" height="10.4" viewBox="0 0 10 11"><path d="M5 0.6L9.4 2.8V8L5 10.4L0.6 8V2.8Z M0.8 2.9L5 5.2L9.2 2.9 M5 5.2V10.2" fill="none" stroke="#a77fd4" stroke-width="1.05" stroke-linejoin="round"/></svg>
<span class="t " style="left:143.00px;top:496.79px;font-size:12px;color:#e6e6e6;letter-spacing:-0.294px;">ParseByDayWithOffset(System.Coll...</span>
<span class="t " style="left:346.50px;top:496.79px;font-size:12px;color:#e6e6e6;letter-spacing:-0.844px;">0</span>
<span class="t " style="left:477.50px;top:496.79px;font-size:12px;color:#e6e6e6;letter-spacing:-0.409px;">0.00%</span>
<span class="t " style="left:621.50px;top:496.79px;font-size:12px;color:#e6e6e6;letter-spacing:-0.844px;">3</span>
<span class="t " style="left:731.50px;top:496.79px;font-size:12px;color:#e6e6e6;letter-spacing:-0.354px;">100.00%</span>
<svg class="b" style="left:122.6px;top:518.84px;" width="9.5" height="10.4" viewBox="0 0 10 11"><path d="M5 0.6L9.4 2.8V8L5 10.4L0.6 8V2.8Z M0.8 2.9L5 5.2L9.2 2.9 M5 5.2V10.2" fill="none" stroke="#a77fd4" stroke-width="1.05" stroke-linejoin="round"/></svg>
<span class="t " style="left:143.00px;top:516.06px;font-size:12px;color:#e6e6e6;letter-spacing:-0.197px;">ParseByDayWithOffset(string)</span>
<span class="t " style="left:346.50px;top:516.06px;font-size:12px;color:#e6e6e6;letter-spacing:-0.844px;">0</span>
<span class="t " style="left:477.50px;top:516.06px;font-size:12px;color:#e6e6e6;letter-spacing:-0.409px;">0.00%</span>
<span class="t " style="left:621.50px;top:516.06px;font-size:12px;color:#e6e6e6;letter-spacing:-0.844px;">5</span>
<span class="t " style="left:731.50px;top:516.06px;font-size:12px;color:#e6e6e6;letter-spacing:-0.354px;">100.00%</span>
<svg class="b" style="left:122.6px;top:538.1100000000001px;" width="9.5" height="10.4" viewBox="0 0 10 11"><path d="M5 0.6L9.4 2.8V8L5 10.4L0.6 8V2.8Z M0.8 2.9L5 5.2L9.2 2.9 M5 5.2V10.2" fill="none" stroke="#a77fd4" stroke-width="1.05" stroke-linejoin="round"/></svg>
<span class="t " style="left:143.00px;top:535.33px;font-size:12px;color:#e6e6e6;letter-spacing:-0.326px;">ParseByMonth(System.Collections....</span>
<span class="t " style="left:346.50px;top:535.33px;font-size:12px;color:#e6e6e6;letter-spacing:-0.844px;">0</span>
<span class="t " style="left:477.50px;top:535.33px;font-size:12px;color:#e6e6e6;letter-spacing:-0.409px;">0.00%</span>
<span class="t " style="left:621.50px;top:535.33px;font-size:12px;color:#e6e6e6;letter-spacing:-0.844px;">3</span>
<span class="t " style="left:731.50px;top:535.33px;font-size:12px;color:#e6e6e6;letter-spacing:-0.354px;">100.00%</span>
<div class="b " style="left:33px;top:553px;width:813px;height:18.4px;background:#3e3e44;"></div>
<svg class="b" style="left:122.6px;top:557.3800000000001px;" width="9.5" height="10.4" viewBox="0 0 10 11"><path d="M5 0.6L9.4 2.8V8L5 10.4L0.6 8V2.8Z M0.8 2.9L5 5.2L9.2 2.9 M5 5.2V10.2" fill="none" stroke="#a77fd4" stroke-width="1.05" stroke-linejoin="round"/></svg>
<span class="t " style="left:143.00px;top:554.60px;font-size:12px;color:#e6e6e6;letter-spacing:-0.213px;">ParseByMonth(string)</span>
<span class="t " style="left:346.50px;top:554.60px;font-size:12px;color:#e6e6e6;letter-spacing:-0.844px;">2</span>
<span class="t " style="left:477.50px;top:554.60px;font-size:12px;color:#e6e6e6;letter-spacing:-0.376px;">15.38%</span>
<span class="t " style="left:621.50px;top:554.60px;font-size:12px;color:#e6e6e6;letter-spacing:-0.197px;">11</span>
<span class="t " style="left:731.50px;top:554.60px;font-size:12px;color:#e6e6e6;letter-spacing:-0.376px;">84.62%</span>
<svg class="b" style="left:122.6px;top:576.6500000000001px;" width="9.5" height="10.4" viewBox="0 0 10 11"><path d="M5 0.6L9.4 2.8V8L5 10.4L0.6 8V2.8Z M0.8 2.9L5 5.2L9.2 2.9 M5 5.2V10.2" fill="none" stroke="#a77fd4" stroke-width="1.05" stroke-linejoin="round"/></svg>
<span class="t " style="left:143.00px;top:573.87px;font-size:12px;color:#e6e6e6;letter-spacing:-0.345px;">ParseByMonthDays(System.Collecti...</span>
<span class="t " style="left:346.50px;top:573.87px;font-size:12px;color:#e6e6e6;letter-spacing:-0.844px;">0</span>
<span class="t " style="left:477.50px;top:573.87px;font-size:12px;color:#e6e6e6;letter-spacing:-0.409px;">0.00%</span>
<span class="t " style="left:621.50px;top:573.87px;font-size:12px;color:#e6e6e6;letter-spacing:-0.844px;">3</span>
<span class="t " style="left:731.50px;top:573.87px;font-size:12px;color:#e6e6e6;letter-spacing:-0.354px;">100.00%</span>
<svg class="b" style="left:122.6px;top:595.9200000000001px;" width="9.5" height="10.4" viewBox="0 0 10 11"><path d="M5 0.6L9.4 2.8V8L5 10.4L0.6 8V2.8Z M0.8 2.9L5 5.2L9.2 2.9 M5 5.2V10.2" fill="none" stroke="#a77fd4" stroke-width="1.05" stroke-linejoin="round"/></svg>
<span class="t " style="left:143.00px;top:593.14px;font-size:12px;color:#e6e6e6;letter-spacing:-0.234px;">ParseByMonthDays(string)</span>
<span class="t " style="left:346.50px;top:593.14px;font-size:12px;color:#e6e6e6;letter-spacing:-0.844px;">5</span>
<span class="t " style="left:477.50px;top:593.14px;font-size:12px;color:#e6e6e6;letter-spacing:-0.376px;">29.41%</span>
<span class="t " style="left:621.50px;top:593.14px;font-size:12px;color:#e6e6e6;letter-spacing:-1.088px;">12</span>
<span class="t " style="left:731.50px;top:593.14px;font-size:12px;color:#e6e6e6;letter-spacing:-0.376px;">70.59%</span>
<svg class="b" style="left:122.6px;top:615.19px;" width="9.5" height="10.4" viewBox="0 0 10 11"><path d="M5 0.6L9.4 2.8V8L5 10.4L0.6 8V2.8Z M0.8 2.9L5 5.2L9.2 2.9 M5 5.2V10.2" fill="none" stroke="#a77fd4" stroke-width="1.05" stroke-linejoin="round"/></svg>
<span class="t " style="left:143.00px;top:612.41px;font-size:12px;color:#e6e6e6;letter-spacing:-0.469px;">ParseBySetPos(System.Collections....</span>
<span class="t " style="left:346.50px;top:612.41px;font-size:12px;color:#e6e6e6;letter-spacing:-0.844px;">0</span>
<span class="t " style="left:477.50px;top:612.41px;font-size:12px;color:#e6e6e6;letter-spacing:-0.409px;">0.00%</span>
<span class="t " style="left:621.50px;top:612.41px;font-size:12px;color:#e6e6e6;letter-spacing:-0.844px;">3</span>
<span class="t " style="left:731.50px;top:612.41px;font-size:12px;color:#e6e6e6;letter-spacing:-0.354px;">100.00%</span>
<svg class="b" style="left:122.6px;top:634.46px;" width="9.5" height="10.4" viewBox="0 0 10 11"><path d="M5 0.6L9.4 2.8V8L5 10.4L0.6 8V2.8Z M0.8 2.9L5 5.2L9.2 2.9 M5 5.2V10.2" fill="none" stroke="#a77fd4" stroke-width="1.05" stroke-linejoin="round"/></svg>
<span class="t " style="left:143.00px;top:631.68px;font-size:12px;color:#e6e6e6;letter-spacing:-0.469px;">ParseBySetPos(string)</span>
<span class="t " style="left:346.50px;top:631.68px;font-size:12px;color:#e6e6e6;letter-spacing:-0.844px;">0</span>
<span class="t " style="left:477.50px;top:631.68px;font-size:12px;color:#e6e6e6;letter-spacing:-0.409px;">0.00%</span>
<span class="t " style="left:621.50px;top:631.68px;font-size:12px;color:#e6e6e6;letter-spacing:-0.844px;">5</span>
<span class="t " style="left:731.50px;top:631.68px;font-size:12px;color:#e6e6e6;letter-spacing:-0.354px;">100.00%</span>
<svg class="b" style="left:122.6px;top:653.73px;" width="9.5" height="10.4" viewBox="0 0 10 11"><path d="M5 0.6L9.4 2.8V8L5 10.4L0.6 8V2.8Z M0.8 2.9L5 5.2L9.2 2.9 M5 5.2V10.2" fill="none" stroke="#a77fd4" stroke-width="1.05" stroke-linejoin="round"/></svg>
<span class="t " style="left:143.00px;top:650.95px;font-size:12px;color:#e6e6e6;letter-spacing:-0.439px;">ParseByYearDay(System.Collections....</span>
<span class="t " style="left:346.50px;top:650.95px;font-size:12px;color:#e6e6e6;letter-spacing:-0.844px;">0</span>
<span class="t " style="left:477.50px;top:650.95px;font-size:12px;color:#e6e6e6;letter-spacing:-0.409px;">0.00%</span>
<span class="t " style="left:621.50px;top:650.95px;font-size:12px;color:#e6e6e6;letter-spacing:-0.844px;">3</span>
<span class="t " style="left:731.50px;top:650.95px;font-size:12px;color:#e6e6e6;letter-spacing:-0.354px;">100.00%</span>
<svg class="b" style="left:122.6px;top:673.0px;" width="9.5" height="10.4" viewBox="0 0 10 11"><path d="M5 0.6L9.4 2.8V8L5 10.4L0.6 8V2.8Z M0.8 2.9L5 5.2L9.2 2.9 M5 5.2V10.2" fill="none" stroke="#a77fd4" stroke-width="1.05" stroke-linejoin="round"/></svg>
<span class="t " style="left:143.00px;top:670.22px;font-size:12px;color:#e6e6e6;letter-spacing:-0.465px;">ParseByYearDay(string)</span>
<span class="t " style="left:346.50px;top:670.22px;font-size:12px;color:#e6e6e6;letter-spacing:-0.844px;">5</span>
<span class="t " style="left:477.50px;top:670.22px;font-size:12px;color:#e6e6e6;letter-spacing:-0.376px;">29.41%</span>
<span class="t " style="left:621.50px;top:670.22px;font-size:12px;color:#e6e6e6;letter-spacing:-1.088px;">12</span>
<span class="t " style="left:731.50px;top:670.22px;font-size:12px;color:#e6e6e6;letter-spacing:-0.376px;">70.59%</span>
<svg class="b" style="left:122.6px;top:692.2700000000001px;" width="9.5" height="10.4" viewBox="0 0 10 11"><path d="M5 0.6L9.4 2.8V8L5 10.4L0.6 8V2.8Z M0.8 2.9L5 5.2L9.2 2.9 M5 5.2V10.2" fill="none" stroke="#a77fd4" stroke-width="1.05" stroke-linejoin="round"/></svg>
<span class="t " style="left:143.00px;top:689.49px;font-size:12px;color:#e6e6e6;letter-spacing:-0.293px;">ParseDayOfWeek(string)</span>
<span class="t " style="left:346.50px;top:689.49px;font-size:12px;color:#e6e6e6;letter-spacing:-1.088px;">13</span>
<span class="t " style="left:477.50px;top:689.49px;font-size:12px;color:#e6e6e6;letter-spacing:-0.376px;">27.66%</span>
<span class="t " style="left:621.50px;top:689.49px;font-size:12px;color:#e6e6e6;letter-spacing:-1.088px;">34</span>
<span class="t " style="left:731.50px;top:689.49px;font-size:12px;color:#e6e6e6;letter-spacing:-0.376px;">72.34%</span>
<svg class="b" style="left:122.6px;top:711.5400000000001px;" width="9.5" height="10.4" viewBox="0 0 10 11"><path d="M5 0.6L9.4 2.8V8L5 10.4L0.6 8V2.8Z M0.8 2.9L5 5.2L9.2 2.9 M5 5.2V10.2" fill="none" stroke="#a77fd4" stroke-width="1.05" stroke-linejoin="round"/></svg>
<span class="t " style="left:143.00px;top:708.76px;font-size:12px;color:#e6e6e6;letter-spacing:-0.176px;">ParseDayOfWeekWithOffset(string)</span>
<span class="t " style="left:346.50px;top:708.76px;font-size:12px;color:#e6e6e6;letter-spacing:-0.844px;">0</span>
<span class="t " style="left:477.50px;top:708.76px;font-size:12px;color:#e6e6e6;letter-spacing:-0.409px;">0.00%</span>
<span class="t " style="left:621.50px;top:708.76px;font-size:12px;color:#e6e6e6;letter-spacing:-1.088px;">21</span>
<span class="t " style="left:731.50px;top:708.76px;font-size:12px;color:#e6e6e6;letter-spacing:-0.354px;">100.00%</span>
</div>
<div class="b " style="left:846px;top:475px;width:13px;height:245px;background:#3e3e42;"></div>
<svg class="b" style="left:848.5px;top:482px;" width="9" height="6" viewBox="0 0 9 6"><path d="M0 6H9L4.5 0.5Z" fill="#999"/></svg>
<svg class="b" style="left:848.5px;top:709px;" width="9" height="6" viewBox="0 0 9 6"><path d="M0 0H9L4.5 5.5Z" fill="#999"/></svg>
<div class="b " style="left:850px;top:559px;width:8px;height:21px;background:#686868;"></div>
<div class="b " style="left:845px;top:475px;width:1px;height:245px;background:#323234;"></div>
<div class="b " style="left:33px;top:720px;width:826px;height:18px;background:#3e3e42;"></div>
<svg class="b" style="left:39px;top:725px;" width="5" height="8" viewBox="0 0 5 8"><path d="M5 0V8L0 4Z" fill="#999"/></svg>
<div class="b " style="left:49px;top:725px;width:775.5px;height:8.5px;background:#686868;"></div>
<svg class="b" style="left:835px;top:725px;" width="5" height="8" viewBox="0 0 5 8"><path d="M0 0V8L5 4Z" fill="#999"/></svg>
<span class="t " style="left:37.50px;top:739.92px;font-size:12px;color:#d0d0d0;letter-spacing:-0.458px;">CodeLens</span>
<span class="t " style="left:101.00px;top:739.92px;font-size:12px;color:#d0d0d0;letter-spacing:-0.362px;">Task Runner Explorer</span>
<span class="t " style="left:222.50px;top:739.92px;font-size:12px;color:#d0d0d0;letter-spacing:-0.353px;">Error List</span>
<span class="t " style="left:280.50px;top:739.92px;font-size:12px;color:#d0d0d0;letter-spacing:0.195px;">Output</span>
<div class="b " style="left:324px;top:738px;width:132.5px;height:20.4px;background:#252526;border:1px solid #3f3f46;border-top:none"></div>
<span class="t " style="left:330.00px;top:739.92px;font-size:12px;color:#0e97fb;letter-spacing:-0.320px;">Code Coverage Results</span>
<div class="b" style="left:399.90px;top:420.60px;width:40.2px;height:40.2px;border-radius:50%;background:#fb4143;box-shadow:0 2px 5px 1px rgba(0,0,0,0.5)"></div>
<span class="t" style="left:412.83px;top:422.12px;line-height:40px;font-size:30.81px;color:#fff;-webkit-text-stroke:0.3px #fff">1</span>
<div class="b " style="left:414.33px;top:450.0px;width:6.09px;height:3.7px;background:#fb4143;"></div>
<div class="b " style="left:423.45px;top:450.0px;width:6.08px;height:3.7px;background:#fb4143;"></div>
<div class="b" style="left:67.90px;top:534.80px;width:40.2px;height:40.2px;border-radius:50%;background:#fb4143;box-shadow:0 2px 5px 1px rgba(0,0,0,0.5)"></div>
<span class="t" style="left:78.90px;top:535.23px;line-height:40px;font-size:31.08px;color:#fff;-webkit-text-stroke:0.4px #fff;transform-origin:0 0;transform:scaleX(1.024)">2</span>
</body></html>
